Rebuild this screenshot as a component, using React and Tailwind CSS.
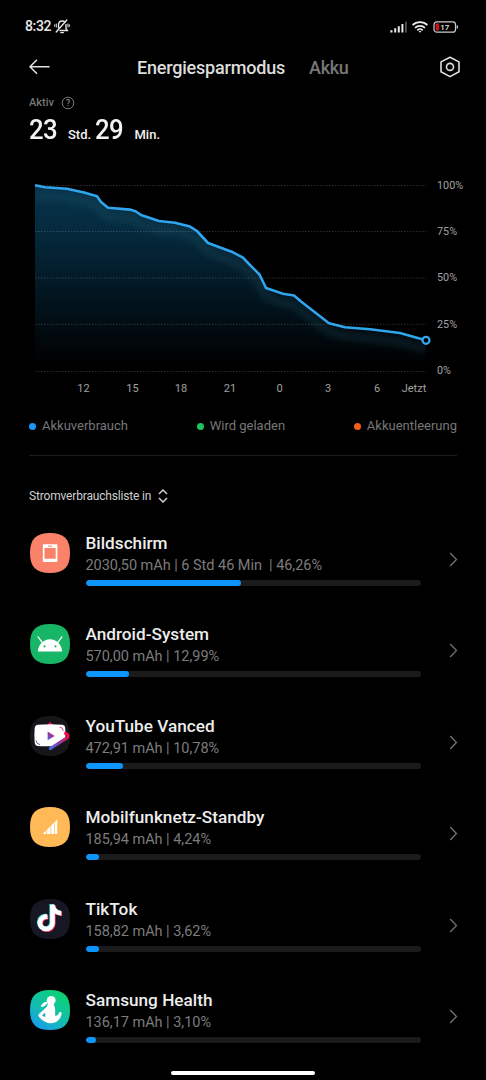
import React from 'react';
import { FaTiktok } from 'react-icons/fa6';

const levels = [
  [35, 185.3], [45, 187.2], [67, 188.8], [84, 192.6], [97, 196.3], [101, 202], [108, 207.7],
  [130, 209.6], [136, 211.5], [141, 215], [159, 221], [175, 222.7], [190, 226.6], [197, 231],
  [208, 243], [233, 252.3], [243, 257.7], [249, 264], [259.5, 274.5], [266, 288], [283, 293.7],
  [294, 295.5], [301, 301.5], [329, 323.2], [345, 327.3], [370, 329.2], [400, 333], [415, 337.3], [426, 340.3],
];

const gridLines = [
  { y: 185.5, labelY: 188.5, label: '100%' },
  { y: 231.5, labelY: 234.8, label: '75%' },
  { y: 278, labelY: 281.2, label: '50%' },
  { y: 324.3, labelY: 327.5, label: '25%' },
  { y: 371.5, labelY: 374, label: '0%' },
];

const hours = [
  { x: 83.5, label: '12' },
  { x: 132.5, label: '15' },
  { x: 181, label: '18' },
  { x: 230, label: '21' },
  { x: 279.5, label: '0' },
  { x: 328, label: '3' },
  { x: 377, label: '6' },
  { x: 414, label: 'Jetzt' },
];

const Squircle = ({ fill }) => (
  <path d="M20 0C34 0 40 6 40 20S34 40 20 40 0 34 0 20 6 0 20 0Z" fill={fill} />
);

const ScreenIcon = () => (
  <svg viewBox="0 0 40 40" className="h-10 w-10">
    <Squircle fill="#fa8268" />
    <path fillRule="evenodd" fill="#fff" d="M13.6 11.3h13a.8.8 0 0 1 .8.8v16a.8.8 0 0 1-.8.8h-13a.8.8 0 0 1-.8-.8v-16a.8.8 0 0 1 .8-.8Zm.9 3.6v10.8h11.2V14.9Z" />
    <path d="M18 13.2h4.2" stroke="#fa8268" strokeWidth="1" />
  </svg>
);

const AndroidIcon = () => (
  <svg viewBox="0 0 40 40" className="h-10 w-10">
    <Squircle fill="#17b566" />
    <path d="M7.8 27.6C8.4 20.4 13.5 15.3 20 15.3s11.6 5.1 12.2 12.3Z" fill="#fff" />
    <path d="m12.3 18.7-4.2-5.8M27.7 18.7l4.2-5.8" stroke="#fff" strokeWidth="1.3" strokeLinecap="round" />
    <circle cx="14.5" cy="22.3" r="1.1" fill="#17b566" />
    <circle cx="25.5" cy="22.3" r="1.1" fill="#17b566" />
  </svg>
);

const VancedIcon = () => (
  <svg viewBox="0 0 40 40" className="h-10 w-10 overflow-visible">
    <defs>
      <linearGradient id="vanced" x1="1" y1="0" x2="0" y2="1">
        <stop offset="0.1" stopColor="#f4094a" />
        <stop offset="0.5" stopColor="#94399b" />
        <stop offset="1" stopColor="#4a6af0" />
      </linearGradient>
    </defs>
    <Squircle fill="#16161a" />
    <path d="m18.3 8.8 1.4-2.4 3.2 2.4Z" fill="#f4094a" stroke="#f4094a" strokeLinejoin="round" />
    <path d="M8 8.7q12-1 24 0 3 .2 3.2 3.2.5 6 .1 9.5L22.5 30.2Q13 30.5 8 29.9 5 29.6 4.7 26.700 4 19 4.700 12 5 9 8 8.700Z" fill="#fff" />
    <path d="m35.500 17.400 2.200 1.200v3L20.300 32.600" fill="none" stroke="url(#vanced)" strokeWidth="3" strokeLinecap="round" strokeLinejoin="round" />
    <path d="M17.600 15.500v8.800l7-4.400Z" fill="url(#vanced)" />
    <path d="M29.500 11q3.600.2 3.800 4" fill="none" stroke="#c51f68" strokeWidth="0.8" />
    <path d="M6 24.500q.3 3.800 4 4" fill="none" stroke="#40446e" strokeWidth="0.8" />
  </svg>
);

const MobileIcon = () => (
  <svg viewBox="0 0 40 40" className="h-10 w-10">
    <Squircle fill="#ffb957" />
    <path d="M12.700 27 16.300 23.200V27ZM17.100 22.500l3.400-3.400v7.900h-3.400ZM21.200 18.400l2.800-2.800v11.400h-2.800ZM24.600 15.200l2.600-2.600v14.400h-2.600Z" fill="#fff" />
  </svg>
);

const TikTokIcon = () => (
  <svg viewBox="0 0 40 40" className="h-10 w-10">
    <Squircle fill="#171723" />
    <FaTiktok x="5.2" y="4.900" size="27" color="#3be0dc" />
    <FaTiktok x="6.800" y="6.100" size="27" color="#f5315c" />
    <FaTiktok x="6" y="5.500" size="27" color="#fff" />
  </svg>
);

const HealthIcon = () => (
  <svg viewBox="0 0 40 40" className="h-10 w-10">
    <defs>
      <linearGradient id="health" x1="0.15" y1="1" x2="0.7" y2="0.1">
        <stop offset="0" stopColor="#1a98f5" />
        <stop offset="0.45" stopColor="#14bab5" />
        <stop offset="1" stopColor="#0bd078" />
      </linearGradient>
    </defs>
    <Squircle fill="url(#health)" />
    <circle cx="21.200" cy="10.300" r="4.400" fill="#fff" />
    <path d="M17.500 11.500c-3 .3-6 2.200-6.700 5.300 3 .5 4.800-1.200 6.700-4Z" fill="#fff" />
    <path d="M17.700 12.500h6c-.2 3 1.600 4 1.500 7.500 0 2.500-.2 4.500.2 6 2-.4 3-1.500 3.600-3.300.4-1.200 3-.8 2.600.8-.6 5.200-4.600 9.600-10.300 9.700-5.200 0-9.800-3.500-12.200-6.300-1-1.200-.9-2.200.1-3.100l4.800-4.400c1.600-1.800 3.900-2 3.700-6.900Z" fill="#fff" />
    <path d="m12 25.500 3.200-3.100.1 4.800Z" fill="#14abca" />
  </svg>
);

const apps = [
  { name: 'Bildschirm', usage: '2030,50 mAh | 6 Std 46 Min \u00a0| 46,26%', width: 155, icon: <ScreenIcon /> },
  { name: 'Android-System', usage: '570,00 mAh | 12,99%', width: 43.5, icon: <AndroidIcon /> },
  { name: 'YouTube Vanced', usage: '472,91 mAh | 10,78%', width: 37.5, icon: <VancedIcon /> },
  { name: 'Mobilfunknetz-Standby', usage: '185,94 mAh | 4,24%', width: 13.5, icon: <MobileIcon /> },
  { name: 'TikTok', usage: '158,82 mAh | 3,62%', width: 13.5, icon: <TikTokIcon /> },
  { name: 'Samsung Health', usage: '136,17 mAh | 3,10%', width: 10.5, icon: <HealthIcon /> },
];

const StatusBar = () => (
  <div className="flex h-[53px] items-center justify-between pl-[25px] pr-[27px]">
    <div className="flex items-center gap-[3px]">
      <span className="text-[14px] font-medium tracking-[-0.35px] text-[#e8e8e8]">8:32</span>
      <svg viewBox="0 0 16 15" className="h-[15px] w-4" fill="none" stroke="#e4e4e4" strokeWidth="1.4" strokeLinecap="round">
        <path d="M4.500 9V6.200C4.500 3.800 6 2 8.200 2c1.200 0 2 .4 2.700 1.100M12 5.500v4l1.300 2H6" />
        <path d="M6.800 13.600h2.600M2.200 13 12.800 1" />
        <path d="M2.300 5v3M.7 5.800v1.500M14 5v3M15.400 5.800v1.500" strokeWidth="1" />
      </svg>
    </div>
    <div className="flex items-center">
      <svg viewBox="0 0 17 12" className="h-3 w-[17px]">
        <path d="M.3 9.300h2.200v2.200H.3ZM4.200 7.300h2v4.200h-2ZM7.800 5.200h2v6.300h-2ZM11.400 3h2v8.500h-2Z" fill="#e8e8e8" />
        <path d="M15 .8h1.800v10.700H15Z" fill="#555" />
      </svg>
      <svg viewBox="0 0 16 12" className="ml-[5px] h-3 w-4" fill="none" stroke="#eee" strokeWidth="1.7">
        <path d="M.6 4.200C4.700.1 11.300.1 15.400 4.200M3 6.900c2.800-2.700 7.200-2.700 10 0M5.300 9.300c1.500-1.500 3.900-1.500 5.400 0" />
        <path d="m6.600 10.300 1.400 1.500 1.400-1.500Q8 9.400 6.600 10.300Z" fill="#eee" stroke="none" />
      </svg>
      <svg viewBox="0 0 26 12" className="ml-[5px] h-3 w-[26px]">
        <rect x="1" y="0.900" width="21.500" height="10.300" rx="2.800" fill="none" stroke="#ccc" strokeWidth="1.200" />
        <path d="M23.500 4.200h.8q.8 0 .8.800v2q0 .8-.8.800h-.8Z" fill="#aaa" />
        <rect x="2.600" y="2.600" width="3.600" height="6.900" rx="0.800" fill="#c4171c" />
        <text x="11.800" y="8.900" textAnchor="middle" fontSize="8" fontWeight="500" fill="#e5e5e5">17</text>
      </svg>
    </div>
  </div>
);

const Header = () => (
  <div className="flex h-7 items-center pl-[29px] pr-[25px]">
    <svg viewBox="0 0 21 16" className="h-4 w-[21px]" fill="none" stroke="#e0e0e0" strokeWidth="1.6" strokeLinecap="round" strokeLinejoin="round">
      <path d="M20 7.800H1M7.500 1.300 1 7.800l6.500 6.500" />
    </svg>
    <h1 className="ml-[87px] text-[18px] font-medium tracking-[-0.2px] text-[#dcdcdc]">Energiesparmodus</h1>
    <span className="ml-6 text-[18px] font-medium tracking-[-0.3px] text-[#777]">Akku</span>
    <svg viewBox="0 0 22 22" className="ml-auto h-[22px] w-[22px]" fill="none" stroke="#dedede" strokeWidth="1.6" strokeLinejoin="round">
      <path d="m11 1.200 9 4.700v9.800l-9 4.900-9-4.900V5.900Z" />
      <circle cx="11" cy="10.900" r="3.500" />
    </svg>
  </div>
);

const BatteryChart = () => {
  const line = levels.map((p) => p.join(',')).join(' ');

  return (
    <svg viewBox="0 147 486 253" className="block h-[253px] w-[486px]">
      <defs>
        <linearGradient id="area" gradientUnits="userSpaceOnUse" x1="0" y1="185" x2="0" y2="365">
          <stop offset="0" stopColor="#06334b" />
          <stop offset="0.25" stopColor="#052a3e" />
          <stop offset="0.65" stopColor="#02131d" />
          <stop offset="1" stopColor="#000" />
        </linearGradient>
        <clipPath id="below">
          <polygon points={`${line} 426,371 35,371`} />
        </clipPath>
        <filter id="glow" filterUnits="userSpaceOnUse" x="0" y="147" width="486" height="253">
          <feGaussianBlur stdDeviation="3.5" />
        </filter>
      </defs>
      <g clipPath="url(#below)">
        <rect x="35" y="180" width="391" height="192" fill="url(#area)" />
        <polyline points={line} transform="translate(0 9)" fill="none" stroke="#3a7186" strokeOpacity="0.22" strokeWidth="7" filter="url(#glow)" />
      </g>
      {gridLines.map((g) => (
        <g key={g.label}>
          <path d={`M35 ${g.y}H426`} stroke="#fff" strokeOpacity="0.17" strokeWidth="1" strokeDasharray="1.5 1.5" />
          <text x="437" y={g.labelY} fontSize="10.8" fill="#a0a0a0">{g.label}</text>
        </g>
      ))}
      {hours.map((h) => (
        <text key={h.label} x={h.x} y="391.7" textAnchor="middle" fontSize="11" fill="#a0a0a0">{h.label}</text>
      ))}
      <polyline points={line} fill="none" stroke="#2fa5ed" strokeWidth="2.6" strokeLinejoin="round" />
      <circle cx="426" cy="340.3" r="3.5" fill="#000" stroke="#35a9ee" strokeWidth="2.2" />
    </svg>
  );
};

const AppRow = ({ app }) => (
  <div className="flex h-[91.4px] items-start pl-[30px] pr-[28px]">
    <div className="mt-px w-10 shrink-0">{app.icon}</div>
    <div className="ml-[15.5px] w-[335.5px]">
      <h2 className="whitespace-pre text-[17.2px] font-medium leading-[22px] text-[#ededed]">{app.name}</h2>
      <p className="mt-px whitespace-pre text-[14.5px] leading-[22px] tracking-[-0.03px] text-[#7c7c7c]">{app.usage}</p>
      <div className="mt-[3px] h-1.5 overflow-hidden rounded-full bg-[#1b1b1b]">
        <div className="h-full rounded-full bg-[#0d95fb]" style={{ width: app.width }} />
      </div>
    </div>
    <svg viewBox="0 0 9 15" className="ml-auto mt-5 h-[15px] w-[9px]" fill="none" stroke="#777" strokeWidth="1.2">
      <path d="m1.200 1 6.300 6.500L1.200 14" />
    </svg>
  </div>
);

const App = () => {
  return (
    <div className="relative h-[1080px] w-[486px] overflow-hidden bg-black font-['Roboto',sans-serif]">
      <StatusBar />
      <Header />

      <div className="mt-3 flex h-5 items-center pl-[29px]">
        <span className="text-[11px] font-medium text-[#777]">Aktiv</span>
        <svg viewBox="0 0 14 14" className="ml-[7px] h-3.5 w-3.5">
          <circle cx="7" cy="7" r="5.8" fill="none" stroke="#777" strokeWidth="1" />
          <text x="7" y="10" textAnchor="middle" fontSize="8.5" fontWeight="500" fill="#888">?</text>
        </svg>
      </div>
      <div className="flex h-[34px] items-baseline pl-[29px] leading-[34px] text-[#f2f2f2]">
        <span className="w-[39px] origin-left scale-x-92 text-[28px] font-medium tracking-[-0.6px]">23</span>
        <span className="w-[27px] text-[13px] font-medium">Std.</span>
        <span className="w-[39.5px] origin-left scale-x-92 text-[28px] font-medium tracking-[-0.6px]">29</span>
        <span className="text-[13px] font-medium">Min.</span>
      </div>

      <BatteryChart />

      <div className="mt-4 flex h-5 items-center justify-between px-[29px] text-[13px] text-[#777]">
        <div className="flex items-center gap-[6px]">
          <span className="h-[7px] w-[7px] rounded-full bg-[#1e96f5]" />
          Akkuverbrauch
        </div>
        <div className="flex items-center gap-[6px]">
          <span className="h-[7px] w-[7px] rounded-full bg-[#1fc45c]" />
          Wird geladen
        </div>
        <div className="flex items-center gap-[6px]">
          <span className="h-[7px] w-[7px] rounded-full bg-[#f65d18]" />
          Akkuentleerung
        </div>
      </div>
      <div className="mx-[29px] mt-[19px] h-px bg-[#1c1c1c]" />

      <div className="mt-[30px] flex h-5 items-center pl-[29px]">
        <span className="text-[12px] tracking-[-0.17px] text-[#cfcfcf]">Stromverbrauchsliste in</span>
        <svg viewBox="0 0 10 14" className="ml-[7px] h-3.5 w-2.5" fill="none" stroke="#d0d0d0" strokeWidth="1.5">
          <path d="m1 5 4-4 4 4M1 9l4 4 4-4" />
        </svg>
      </div>

      <div className="mt-[26px]">
        {apps.map((app) => (
          <AppRow key={app.name} app={app} />
        ))}
      </div>

      <div className="absolute bottom-[5px] left-[171px] h-1 w-36 rounded-full bg-white" />
    </div>
  );
};

export default App;
